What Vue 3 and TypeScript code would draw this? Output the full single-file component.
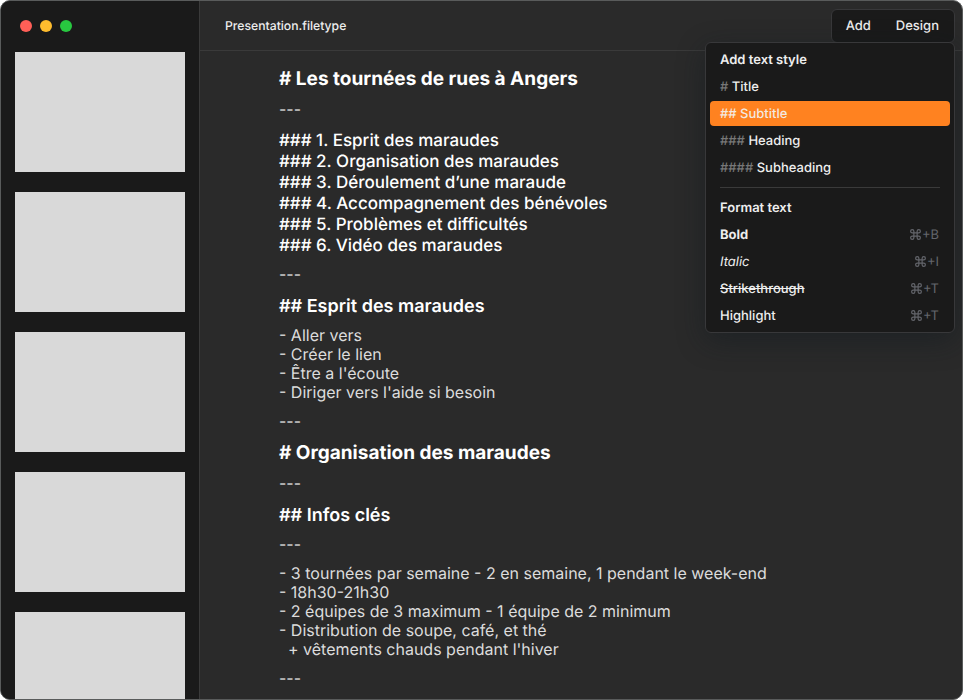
<script setup lang="ts">
interface Block {
  kind: 'title' | 'subtitle' | 'heading' | 'body' | 'rule'
  lines: string[]
}

interface StyleItem {
  mark: string
  label: string
  active?: boolean
}

interface FormatItem {
  label: string
  keys: string
  look: string
}

const slides: number[] = [1, 2, 3, 4, 5]

const blocks: Block[] = [
  { kind: 'title', lines: ['# Les tournées de rues à Angers'] },
  { kind: 'rule', lines: ['---'] },
  {
    kind: 'heading',
    lines: [
      '### 1. Esprit des maraudes',
      '### 2. Organisation des maraudes',
      '### 3. Déroulement d’une maraude',
      '### 4. Accompagnement des bénévoles',
      '### 5. Problèmes et difficultés',
      '### 6. Vidéo des maraudes',
    ],
  },
  { kind: 'rule', lines: ['---'] },
  { kind: 'subtitle', lines: ['## Esprit des maraudes'] },
  {
    kind: 'body',
    lines: ['- Aller vers', '- Créer le lien', "- Être a l'écoute", "- Diriger vers l'aide si besoin"],
  },
  { kind: 'rule', lines: ['---'] },
  { kind: 'title', lines: ['# Organisation des maraudes'] },
  { kind: 'rule', lines: ['---'] },
  { kind: 'subtitle', lines: ['## Infos clés'] },
  { kind: 'rule', lines: ['---'] },
  {
    kind: 'body',
    lines: [
      '- 3 tournées par semaine - 2 en semaine, 1 pendant le week-end',
      '- 18h30-21h30',
      '- 2 équipes de 3 maximum - 1 équipe de 2 minimum',
      '- Distribution de soupe, café, et thé',
      "  + vêtements chauds pendant l'hiver",
    ],
  },
  { kind: 'rule', lines: ['---'] },
]

const styles: StyleItem[] = [
  { mark: '#', label: 'Title' },
  { mark: '##', label: 'Subtitle', active: true },
  { mark: '###', label: 'Heading' },
  { mark: '####', label: 'Subheading' },
]

const formats: FormatItem[] = [
  { label: 'Bold', keys: '+B', look: 'bold' },
  { label: 'Italic', keys: '+I', look: 'italic' },
  { label: 'Strikethrough', keys: '+T', look: 'strike' },
  { label: 'Highlight', keys: '+T', look: 'plain' },
]
</script>

<template>
  <div class="window">
    <aside class="sidebar">
      <div class="lights">
        <span class="light close"></span>
        <span class="light minimize"></span>
        <span class="light expand"></span>
      </div>
      <div v-for="slide in slides" :key="slide" class="slide"></div>
    </aside>

    <main class="main">
      <header class="topbar">
        <span class="filename">Presentation.filetype</span>
        <nav class="tabs">
          <span>Add</span>
          <span>Design</span>
        </nav>
      </header>

      <article class="editor">
        <div v-for="(block, i) in blocks" :key="i" class="block" :class="block.kind">
          <div v-for="line in block.lines" :key="line">{{ line }}</div>
        </div>
      </article>
    </main>

    <div class="menu">
      <div class="row caption">Add text style</div>
      <div v-for="item in styles" :key="item.label" class="row" :class="{ active: item.active }">
        <span><span class="mark">{{ item.mark }}</span> {{ item.label }}</span>
      </div>
      <div class="divider"></div>
      <div class="row caption">Format text</div>
      <div v-for="item in formats" :key="item.label" class="row">
        <span :class="item.look">{{ item.label }}</span>
        <span class="keys">
          <svg class="command" viewBox="0 0 24 24" fill="none" stroke="currentColor" stroke-width="2.2">
            <path d="M15 6v12a3 3 0 1 0 3-3H6a3 3 0 1 0 3 3V6a3 3 0 1 0-3 3h12a3 3 0 1 0-3-3" />
          </svg>
          <span>{{ item.keys }}</span>
        </span>
      </div>
    </div>
  </div>
</template>

<style>
body {
  background: #fff;
}
</style>

<style scoped>
.window {
  position: relative;
  display: flex;
  width: 963px;
  height: 700px;
  box-sizing: border-box;
  border: 1px solid #595b5b;
  border-radius: 10px;
  overflow: hidden;
  background: #2a2a2a;
  color: #fff;
  font-family: Inter, 'Liberation Sans', sans-serif;
  font-size: 13px;
  text-rendering: geometricPrecision;
}

.sidebar {
  flex: none;
  display: flex;
  flex-direction: column;
  gap: 20px;
  width: 199px;
  box-sizing: border-box;
  padding: 19px 14px 0;
  border-right: 1px solid #3a3a3a;
  background: #1a1a1a;
}

.lights {
  display: flex;
  gap: 8px;
  padding-left: 5px;
}

.light {
  width: 12px;
  height: 12px;
  border-radius: 50%;
}

.close {
  background: #ff5f57;
}

.minimize {
  background: #febc2e;
}

.expand {
  background: #28c840;
}

.slide {
  flex: none;
  width: 170px;
  height: 120px;
  background: #d9d9d9;
}

.main {
  flex: 1;
  min-width: 0;
}

.topbar {
  display: flex;
  align-items: center;
  justify-content: space-between;
  height: 50px;
  box-sizing: border-box;
  padding: 0 7px 0 25px;
  border-bottom: 1px solid #3a3a3a;
}

.filename {
  color: #eee;
  font-size: 12.2px;
  font-weight: 500;
}

.tabs {
  display: flex;
  align-items: center;
  gap: 25px;
  height: 34px;
  box-sizing: border-box;
  padding: 0 15px 0 14px;
  border: 1px solid #38383a;
  border-radius: 6px;
  background: #1a1a1a;
  color: #eee;
  font-weight: 500;
}

.editor {
  display: flex;
  flex-direction: column;
  gap: 10px;
  padding: 16px 0 0 79px;
}

.block {
  white-space: pre;
}

.title {
  font-size: 19px;
  line-height: 23px;
  font-weight: 700;
}

.subtitle {
  margin-bottom: -2px;
  padding-top: 2px;
  font-size: 18px;
  line-height: 22px;
  font-weight: 600;
}

.heading {
  margin-bottom: -2px;
  padding-top: 2px;
  font-size: 17px;
  line-height: 21px;
  font-weight: 500;
}

.body {
  color: #dcdcdc;
  font-size: 16px;
  line-height: 19px;
  font-weight: 400;
}

.rule {
  color: #dcdcdc;
  font-size: 16px;
  line-height: 19px;
}

.menu {
  position: absolute;
  top: 41px;
  right: 7px;
  width: 250px;
  height: 291px;
  box-sizing: border-box;
  padding: 4px;
  border: 1px solid #38383a;
  border-radius: 6px;
  background: #1a1a1a;
  box-shadow: 0 8px 28px rgba(16, 24, 30, 0.45);
  color: #eee;
  font-weight: 500;
}

.row {
  display: flex;
  align-items: center;
  justify-content: space-between;
  height: 25px;
  box-sizing: border-box;
  margin-bottom: 2px;
  padding: 1px 11px 0 10px;
  border-radius: 4px;
}

.caption {
  font-weight: 600;
}

.mark {
  color: #777;
}

.active,
.active .mark {
  background: #ff8220;
  color: #f4e8df;
}

.divider {
  height: 1px;
  margin: 7px 10px;
  background: #3a3a3a;
}

.bold {
  font-weight: 700;
}

.italic {
  font-style: italic;
  font-weight: 400;
}

.strike {
  text-decoration: line-through;
}

.keys {
  display: flex;
  align-items: center;
  color: #63656b;
  font-weight: 400;
}

.command {
  width: 13px;
  height: 13px;
  margin-bottom: 2px;
}
</style>
